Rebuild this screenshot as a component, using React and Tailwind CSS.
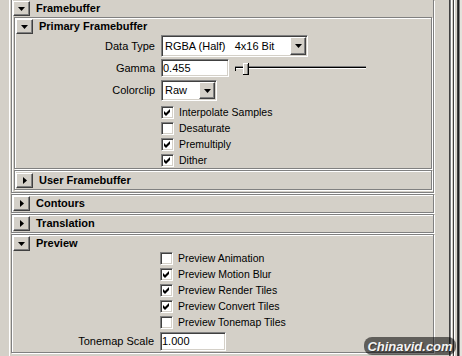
import React from 'react';

const SUNKEN =
  'border border-t-[#808080] border-l-[#808080] border-b-white border-r-white shadow-[inset_1px_1px_0_#404040,inset_-1px_-1px_0_#d4d0c8]';
const RAISED =
  'border border-t-white border-l-white border-b-[#404040] border-r-[#404040] shadow-[inset_-1px_-1px_0_#808080]';
const ETCHED = 'border border-[#808080] shadow-[inset_1px_1px_0_#fff,1px_1px_0_#fff]';

function Arrow({ open }) {
  return (
    <div className={`${RAISED} w-[17px] h-[15px] bg-[#d4d0c8] flex items-center justify-center shrink-0`}>
      {open ? (
        <svg width="7" height="4" viewBox="0 0 7 4">
          <path d="M0 0h7L3.5 4z" fill="#000" />
        </svg>
      ) : (
        <svg width="4" height="7" viewBox="0 0 4 7">
          <path d="M0 0v7l4-3.5z" fill="#000" />
        </svg>
      )}
    </div>
  );
}

function Header({ title, open, className = 'h-[17px]' }) {
  return (
    <div className={`flex items-center ${className}`}>
      <div className="ml-px">
        <Arrow open={open} />
      </div>
      <span className="ml-[6px] font-bold text-[11px] leading-none">{title}</span>
    </div>
  );
}

function Check({ checked, label }) {
  return (
    <div className="flex items-center h-[16px]">
      <div className={`${SUNKEN} w-[13px] h-[13px] bg-white flex items-center justify-center shrink-0`}>
        {checked && (
          <svg width="9" height="9" viewBox="0 0 9 9">
            <polygon points="1,3 3,5 7,1 7,4 3,8 1,6" fill="#000" />
          </svg>
        )}
      </div>
      <span className="ml-[5px] text-[10.5px] leading-none">{label}</span>
    </div>
  );
}

function Dropdown({ value, className }) {
  return (
    <div className={`${SUNKEN} ${className} bg-white flex items-center p-[1px]`}>
      <span className="flex-1 pl-[2px] text-[11px] leading-none whitespace-pre">{value}</span>
      <div className={`${RAISED} w-[16px] h-full bg-[#d4d0c8] flex items-center justify-center`}>
        <svg width="7" height="4" viewBox="0 0 7 4">
          <path d="M0 0h7L3.5 4z" fill="#000" />
        </svg>
      </div>
    </div>
  );
}

function Field({ value, className }) {
  return (
    <div className={`${SUNKEN} ${className} bg-white flex items-center pl-[1px] text-[11px] leading-none`}>
      {value}
    </div>
  );
}

function Slider() {
  return (
    <svg width="133" height="18" viewBox="0 0 133 18" className="ml-[5px]">
      <rect x="1" y="7" width="131" height="1" fill="#808080" />
      <rect x="1" y="8" width="131" height="1" fill="#000" />
      <rect x="1" y="9" width="131" height="1" fill="#fff" />
      <rect x="1" y="8" width="1" height="4" fill="#000" />
      <rect x="9" y="4" width="6" height="11" fill="#d4d0c8" />
      <rect x="9" y="4" width="1" height="11" fill="#fff" />
      <rect x="9" y="4" width="6" height="1" fill="#fff" />
      <rect x="14" y="4" width="1" height="12" fill="#000" />
      <rect x="9" y="15" width="6" height="1" fill="#000" />
      <rect x="13" y="5" width="1" height="10" fill="#808080" />
    </svg>
  );
}

export default function App() {
  return (
    <div className="relative w-[462px] h-[356px] bg-[#d4d0c8] flex overflow-hidden text-black font-['Liberation_Sans',Arial,sans-serif]">
      {/* left edge */}
      <div className="flex shrink-0">
        <div className="w-[9px]" />
        <div className="w-px bg-white" />
        <div className="w-px" />
      </div>

      <div className="w-[423px] flex flex-col shrink-0">
        {/* Framebuffer */}
        <div className="border border-t-0 border-[#808080] shadow-[inset_1px_0_0_#fff,1px_1px_0_#fff] pb-[2px]">
          <Header title="Framebuffer" open />
          <div className="flex flex-col ml-[2px] mr-px">
            <div className={ETCHED}>
              <Header title="Primary Framebuffer" open />
              <div className="grid grid-cols-[140px_auto] gap-x-[6px] items-center">
                <span className="text-right text-[11px] leading-none">Data Type</span>
                <div className="flex">
                  <Dropdown value="RGBA (Half)   4x16 Bit" className="w-[147px] h-[22px]" />
                </div>
                <span className="text-right text-[11px] leading-none mt-[2px]">Gamma</span>
                <div className="flex items-center mt-[2px]">
                  <Field value="0.455" className="w-[68px] h-[18px]" />
                  <Slider />
                </div>
                <span className="text-right text-[11px] leading-none mt-[3px]">Colorclip</span>
                <div className="flex mt-[3px]">
                  <Dropdown value="Raw" className="w-[56px] h-[21px]" />
                </div>
                <div />
                <div className="flex flex-col mt-[3px]">
                  <Check checked label="Interpolate Samples" />
                  <Check label="Desaturate" />
                  <Check checked label="Premultiply" />
                  <Check checked label="Dither" />
                </div>
              </div>
            </div>
            <div className={`${ETCHED} mt-px`}>
              <Header title="User Framebuffer" className="h-[18px]" />
            </div>
          </div>
        </div>

        <div className={`${ETCHED} mt-px`}>
          <Header title="Contours" />
        </div>
        <div className={`${ETCHED} mt-px`}>
          <Header title="Translation" />
        </div>
        <div className={`${ETCHED} mt-px`}>
          <Header title="Preview" open />
          <div className="grid grid-cols-[142px_auto] gap-x-[6px] items-center -mt-[2px]">
            <div />
            <div className="flex flex-col">
              <Check label="Preview Animation" />
              <Check checked label="Preview Motion Blur" />
              <Check checked label="Preview Render Tiles" />
              <Check checked label="Preview Convert Tiles" />
              <Check label="Preview Tonemap Tiles" />
            </div>
            <span className="text-right text-[11px] leading-none">Tonemap Scale</span>
            <div className="flex items-center h-[22px]">
              <Field value="1.000" className="w-[66px] h-[19px]" />
            </div>
          </div>
        </div>
      </div>

      {/* right edge */}
      <div className="flex shrink-0">
        <div className="w-[15px]" />
        <div className="w-px bg-[#404040]" />
        <div className="w-px bg-[#808080]" />
        <div className="w-px bg-white" />
        <div className="w-px" />
        <div className="w-px bg-[#404040]" />
        <div className="w-px bg-white" />
        <div className="w-[2px]" />
        <div className="w-px bg-[#404040]" />
        <div className="w-px bg-[#202020]" />
        <div className="w-px bg-[#808080]" />
        <div className="w-[2px] bg-[#e4e2dc]" />
      </div>

      {/* watermark */}
      <div className="absolute right-[6px] bottom-px w-[92px] h-[18px] rounded-[8px] bg-black/55 flex items-center justify-center">
        <span className="text-[13px] font-bold italic text-[#f4f4f4] leading-none [text-shadow:1px_1px_1px_#333]">
          Chinavid.com
        </span>
      </div>
    </div>
  );
}
